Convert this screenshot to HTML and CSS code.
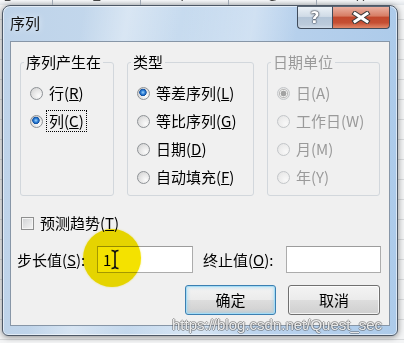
FILE: index.html
```html
<!DOCTYPE html>
<html>
	<head>
		<meta charset="utf-8">
		<title>序列</title>
		<link rel="stylesheet" href="styles.css">
	</head>

	<body>
		<div id="sheetHead">
			<span class="col">D</span>
			<span class="col">E</span>
			<span class="col">F</span>
			<span class="col">G</span>
			<span class="col">H</span>
		</div>
		<div id="dialog">
			<div id="titleBar">
				<span id="title">序列</span>
				<div id="captionButtons">
					<span class="caption help">?</span>
					<span class="caption close">
						<svg width="20" height="13" viewBox="0 0 20 13">
							<path d="M4 2.5 L16 10.5 M16 2.5 L4 10.5" stroke="#3b3b3b" stroke-width="5" stroke-linecap="square" fill="none"/>
							<path d="M4 2.5 L16 10.5 M16 2.5 L4 10.5" stroke="#ffffff" stroke-width="3" stroke-linecap="square" fill="none"/>
						</svg>
					</span>
				</div>
			</div>
			<form id="client">
				<div class="groups">
					<fieldset class="group group-rows">
						<legend>序列产生在</legend>
						<label class="option"><input class="radio" type="radio" name="rows"><span class="text">行(<u>R</u>)</span></label>
						<label class="option"><input class="radio" type="radio" name="rows" checked><span class="text focus">列(<u>C</u>)</span></label>
					</fieldset>
					<fieldset class="group group-type">
						<legend>类型</legend>
						<label class="option"><input class="radio" type="radio" name="type" checked><span class="text">等差序列(<u>L</u>)</span></label>
						<label class="option"><input class="radio" type="radio" name="type"><span class="text">等比序列(<u>G</u>)</span></label>
						<label class="option"><input class="radio" type="radio" name="type"><span class="text">日期(<u>D</u>)</span></label>
						<label class="option"><input class="radio" type="radio" name="type"><span class="text">自动填充(<u>F</u>)</span></label>
					</fieldset>
					<fieldset class="group group-date" disabled>
						<legend>日期单位</legend>
						<label class="option"><input class="radio" type="radio" name="unit" checked disabled><span class="text">日(A)</span></label>
						<label class="option"><input class="radio" type="radio" name="unit" disabled><span class="text">工作日(W)</span></label>
						<label class="option"><input class="radio" type="radio" name="unit" disabled><span class="text">月(M)</span></label>
						<label class="option"><input class="radio" type="radio" name="unit" disabled><span class="text">年(Y)</span></label>
					</fieldset>
				</div>

				<label class="trend"><input class="check" type="checkbox"><span class="text">预测趋势(<u>T</u>)</span></label>

				<div class="values">
					<label class="value-label">步长值(<u>S</u>):</label>
					<input class="field step" type="text" value="1">
					<label class="value-label stop-label">终止值(<u>O</u>):</label>
					<input class="field stop" type="text">
				</div>

				<div class="buttons">
					<button class="button default" type="button">确定</button>
					<button class="button" type="button">取消</button>
				</div>
			</form>
		</div>

		<div id="spot"></div>
		<svg id="cursor" width="10" height="21" viewBox="0 0 10 21">
			<path d="M1.5 1.5 Q5 1.5 5 4 Q5 1.5 8.5 1.5 M5 4 V17 M1.5 19.5 Q5 19.5 5 17 Q5 19.5 8.5 19.5" stroke="#111" stroke-width="1.6" fill="none"/>
		</svg>
		<div id="watermark">https://blog.csdn.net/Quest_sec</div>
	</body>
</html>
```

FILE: styles.css
```css
html {
	background: #f2f3f4;
}

body {
	margin: 0px;
	padding: 0px;
	overflow: hidden;
	height: 343px;
	font-family: "Noto Sans CJK SC", sans-serif;
	font-size: 15px;
	color: #000;
	background: repeating-linear-gradient(to bottom, #f4f5f6 0px, #f4f5f6 19px, #d9dbdd 19px, #d9dbdd 20px);
}

/* spreadsheet behind the dialog */
#sheetHead {
	display: flex;
	height: 5px;
	overflow: hidden;
	margin-left: -35px;
	background: linear-gradient(to bottom, #f7f8fa, #e2e6ea);
}

.col {
	flex: 0 0 87px;
	margin-top: -10px;
	border-right: 1px solid #9ea7b2;
	text-align: center;
	font: 13px/1 "Liberation Sans", sans-serif;
	color: #444;
}

#dialog {
	box-sizing: border-box;
	width: 396px;
	height: 331px;
	margin-left: 2px;
	padding: 0px 7px;
	border: 1px solid #4d5866;
	border-radius: 8px 8px 6px 6px;
	background:
		linear-gradient(100deg, rgba(255,255,255,0) 18%, rgba(255,255,255,0.35) 28%, rgba(255,255,255,0) 40%, rgba(255,255,255,0.3) 56%, rgba(255,255,255,0) 66%),
		linear-gradient(to right, #bed3e9, #c7dbef 45%, #b6d0ec 75%, #adcbea);
	box-shadow: 0px 1px 6px rgba(0,0,0,0.45), inset 0px 0px 0px 1px rgba(255,255,255,0.55);
}

#titleBar {
	display: flex;
	align-items: flex-start;
	height: 35px;
}

#title {
	margin-top: 8px;
	line-height: 18px;
	color: #111;
	text-shadow: 0px 0px 6px rgba(255,255,255,0.9);
}

#captionButtons {
	display: flex;
	margin-left: auto;
}

.caption {
	box-sizing: border-box;
	display: flex;
	align-items: center;
	justify-content: center;
	height: 23px;
	border: 1px solid #3f4b5b;
	border-top-color: #5a6675;
}

.help {
	width: 35px;
	border-right: none;
	border-radius: 0px 0px 0px 4px;
	background: linear-gradient(to bottom, #eaf0f6 0%, #d0dbe6 45%, #b4c5d7 50%, #bccbdb 85%, #cfdbe8 100%);
	font: bold 16px/1 "DejaVu Sans", sans-serif;
	color: #fff;
	text-shadow: 0px 0px 1px #2c3440, 0px 0px 1px #2c3440, 0px 0px 2px #2c3440;
}

.close {
	width: 58px;
	border-radius: 0px 0px 4px 0px;
	background: linear-gradient(to bottom, #eab0a1 0%, #d77e66 42%, #c2482d 50%, #c54f33 75%, #e1896a 100%);
}

#client {
	box-sizing: border-box;
	display: flex;
	flex-direction: column;
	height: 285px;
	margin: 0px;
	padding: 11px 0px 10px 0px;
	border: 1px solid #8796a7;
	background: #f0f0f0;
}

.groups {
	display: flex;
	gap: 13px;
	height: 143px;
	margin: 0px 9px;
}

.group {
	box-sizing: border-box;
	min-width: 0px;
	margin: 0px;
	padding: 8px 4px 4px 3px;
	border: 1px solid #d2d7dc;
	border-radius: 3px;
}

.group legend {
	padding: 0px 2px;
	line-height: 18px;
}

.group-rows {
	width: 94px;
}

.group-type {
	width: 127px;
}

.group-date {
	width: 113px;
	color: #9a9a9a;
}

.option {
	display: flex;
	align-items: center;
	gap: 3px;
	height: 28px;
	margin-left: 6px;
	white-space: nowrap;
}

.text {
	padding: 1px 2px;
	border: 1px dotted transparent;
	line-height: 18px;
}

.text.focus {
	border-color: #000;
}

.radio {
	-webkit-appearance: none;
	appearance: none;
	box-sizing: border-box;
	flex: none;
	width: 13px;
	height: 13px;
	margin: 0px;
	border: 1px solid #8e9296;
	border-radius: 50%;
	background: radial-gradient(circle at 70% 70%, #fbfbfb 0%, #e6e6e6 50%, #cdcdcd 100%);
}

.radio:checked {
	background:
		radial-gradient(circle at 45% 40%, #9fd4f8 0px, #2f80d8 2px, #104f9f 3.4px, rgba(16,79,159,0) 4px),
		radial-gradient(circle at 70% 70%, #fbfbfb 0%, #e2e2e2 50%, #cdcdcd 100%);
}

.radio:disabled {
	border-color: #c3c6c9;
	background: radial-gradient(circle at 70% 70%, #f8f8f8 0%, #ececec 60%, #e0e0e0 100%);
}

.radio:disabled:checked {
	background:
		radial-gradient(circle, #a3a3a3 0px, #a3a3a3 2.6px, rgba(163,163,163,0) 3.2px),
		radial-gradient(circle, #f4f4f4 0px, #f4f4f4 3.4px, #b9b9b9 4px, #e6e6e6 5px);
}

.trend {
	display: flex;
	align-items: center;
	gap: 3px;
	height: 18px;
	margin: 18px 0px 0px 10px;
}

.check {
	-webkit-appearance: none;
	appearance: none;
	box-sizing: border-box;
	flex: none;
	width: 13px;
	height: 13px;
	margin: 0px;
	border: 1px solid #8e8f8f;
	background: linear-gradient(135deg, #cfd1d3, #f5f5f5);
	box-shadow: inset 0px 0px 0px 1px #f4f4f4;
}

.values {
	display: flex;
	align-items: center;
	height: 27px;
	margin: 14px 0px 0px 6px;
}

.value-label {
	box-sizing: border-box;
	width: 80px;
	line-height: 18px;
}

.stop-label {
	width: 93px;
	padding-left: 10px;
}

.field {
	box-sizing: border-box;
	width: 96px;
	height: 27px;
	margin: 0px;
	padding: 0px 5px;
	border: 1px solid #acacac;
	border-top-color: #9c9c9c;
	background: #fff;
	font: 15px "Noto Sans CJK SC", sans-serif;
	color: #000;
	outline: none;
}

.field.stop {
	width: 95px;
}

.buttons {
	display: flex;
	justify-content: flex-end;
	gap: 12px;
	margin: 12px 9px 0px 0px;
}

.button {
	box-sizing: border-box;
	width: 92px;
	height: 30px;
	padding: 0px;
	border: 1px solid #707070;
	border-radius: 3px;
	background: linear-gradient(to bottom, #f3f3f3 0%, #ebebeb 50%, #dddddd 51%, #cfcfcf 100%);
	box-shadow: inset 0px 0px 0px 1px rgba(255,255,255,0.75);
	font: 15px/18px "Noto Sans CJK SC", sans-serif;
	color: #000;
}

.button.default {
	width: 91px;
	border-color: #3c7fb1;
	box-shadow: inset 0px 0px 0px 1px #a4dcf6, inset 0px 0px 3px 2px rgba(120,200,240,0.35);
}

/* overlays from the screen recording */
#spot {
	position: absolute;
	left: 83px;
	top: 229px;
	width: 58px;
	height: 58px;
	border-radius: 50%;
	background: #f4e200;
	mix-blend-mode: multiply;
	box-shadow: 0px 0px 2px rgba(244,226,0,0.6);
}

#cursor {
	position: absolute;
	left: 110px;
	top: 249px;
}

#watermark {
	position: absolute;
	left: 172px;
	top: 315px;
	font: 15px/20px "Liberation Sans", sans-serif;
	color: rgba(255,255,255,0.85);
	text-shadow: 1px 0px 0px rgba(80,80,80,0.45), -1px 0px 0px rgba(80,80,80,0.45), 0px 1px 0px rgba(80,80,80,0.45), 0px -1px 0px rgba(80,80,80,0.45);
	white-space: nowrap;
}
```
